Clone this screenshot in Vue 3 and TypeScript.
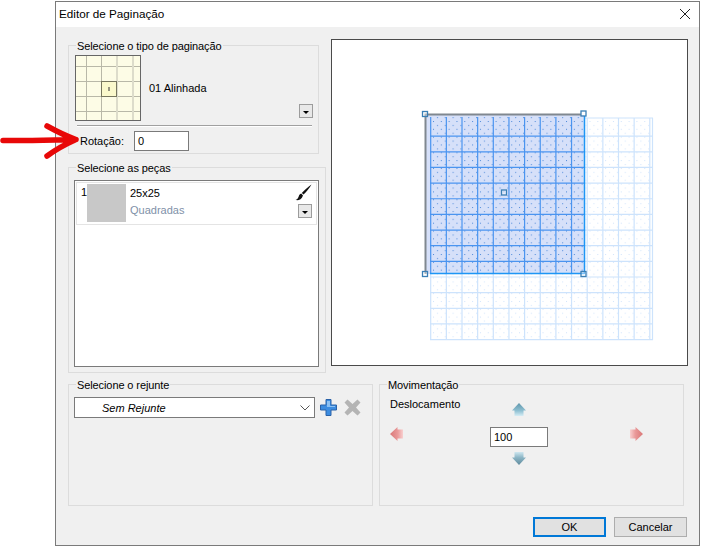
<script setup lang="ts">
const STEP = 15.65
const range = (n: number, from = 0) => Array.from({ length: n - from }, (_, i) => i + from)
const vLight = [...range(15).map((k) => 430.7 + k * STEP), 652.5]
const hLight = [118, ...range(15, 1).map((k) => 120.5 + k * STEP)]
const vDark = range(10).map((k) => 430.7 + k * STEP)
const hDark = range(10, 1).map((k) => 120.5 + k * STEP)
const handles = [
  [425, 114],
  [583.5, 113.5],
  [425, 274],
  [583.5, 274],
  [504, 192.5],
]
</script>

<template>
  <div class="page">
    <div class="dialog">
      <header class="titlebar">
        <span class="title">Editor de Paginação</span>
        <svg class="close" width="12" height="12" viewBox="0 0 12 12">
          <path d="M1 1 L11 11 M11 1 L1 11" stroke="#222" stroke-width="1" fill="none" />
        </svg>
      </header>

      <div class="content">
        <div class="top">
          <div class="left">
            <section class="group group-type">
              <span class="legend">Selecione o tipo de paginação</span>
              <div class="type-row">
                <svg class="thumb" width="66" height="66" viewBox="75 55 66 66">
                  <rect x="75" y="55" width="66" height="66" fill="#fdfce6" />
                  <path d="M86.5 55V121M101.5 55V121M75 66.5H141M75 81.5H141M75 96.5H141M75 111.5H141" stroke="#b9b8a8" stroke-width="1" />
                  <path d="M117 55V121M133 55V121" stroke="#dddccb" stroke-width="2" />
                  <rect x="101.5" y="81.5" width="15" height="15" fill="#fbf9cc" stroke="#77765f" />
                  <rect x="108.5" y="87" width="1" height="4" fill="#333" />
                  <rect x="75.5" y="55.5" width="65" height="65" fill="none" stroke="#666" />
                </svg>
                <span class="type-name">01 Alinhada</span>
                <button class="mini type-drop"><i></i></button>
              </div>
              <div class="divider"></div>
              <div class="rotation">
                <label class="rot-label">Rotação:</label>
                <div class="input rot-input">0</div>
              </div>
            </section>

            <section class="group group-pieces">
              <span class="legend">Selecione as peças</span>
              <div class="list">
                <div class="piece">
                  <span class="index">1</span>
                  <div class="swatch"></div>
                  <div class="piece-text">
                    <span>25x25</span>
                    <span class="muted">Quadradas</span>
                  </div>
                  <div class="piece-tools">
                    <svg width="17" height="17" viewBox="0 0 17 17">
                      <path d="M16.5 0.5 C13 3 9 6.5 6.8 9 L8.6 10.6 C11 8 14.5 4 16.5 0.5 Z" fill="#111" />
                      <path d="M6.2 9.6 C4 10 4 12.5 3 14 C2.4 15 1.4 15.6 0.5 16 C3.5 16.6 6.6 15.6 8 11.4 Z" fill="#111" />
                    </svg>
                    <button class="mini"><i></i></button>
                  </div>
                </div>
              </div>
            </section>
          </div>

          <div class="preview">
            <svg width="355" height="325" viewBox="332 40 355 325">
              <defs>
                <pattern id="dotsLight" x="432" y="120" width="7.825" height="7.825" patternUnits="userSpaceOnUse">
                  <rect x="1" y="1" width="1" height="1" fill="#cfe3fb" />
                  <rect x="5" y="5" width="1" height="1" fill="#cfe3fb" />
                </pattern>
                <pattern id="dotsDark" x="432" y="120" width="7.825" height="7.825" patternUnits="userSpaceOnUse">
                  <rect x="1" y="1" width="1" height="1" fill="#4a86d8" />
                  <rect x="5" y="5" width="1" height="1" fill="#4a86d8" />
                </pattern>
              </defs>
              <rect x="430" y="118" width="223" height="222" fill="url(#dotsLight)" />
              <line v-for="x in vLight" :key="'vl' + x" :x1="x" :x2="x" y1="118" y2="340" stroke="#cde3fc" stroke-width="1.2" />
              <line v-for="y in hLight" :key="'hl' + y" :y1="y" :y2="y" x1="430" x2="653" stroke="#cde3fc" stroke-width="1.2" />

              <rect x="426" y="115" width="158" height="159" fill="#d6e0f9" />
              <rect x="430" y="117" width="154" height="157" fill="url(#dotsDark)" />
              <line v-for="x in vDark" :key="'vd' + x" :x1="x" :x2="x" y1="117" y2="274" stroke="#4a94f0" stroke-width="1.2" />
              <line v-for="y in hDark" :key="'hd' + y" :y1="y" :y2="y" x1="430" x2="584" stroke="#4a94f0" stroke-width="1.2" />
              <path d="M584.5 116V274M430 273.5H584.5" stroke="#1e96f5" stroke-width="1.5" fill="none" />
              <path d="M425.5 274V114.5H581" stroke="#808890" stroke-width="2" fill="none" />

              <rect
                v-for="h in handles"
                :key="h[0] + '-' + h[1]"
                :x="h[0] - 2.5"
                :y="h[1] - 2.5"
                width="5"
                height="5"
                fill="#fff"
                fill-opacity="0.4"
                stroke="#3b7fb5"
                stroke-width="1.3"
              />
            </svg>
          </div>
        </div>

        <div class="bottom">
          <section class="group group-grout">
            <span class="legend">Selecione o rejunte</span>
            <div class="grout-row">
              <div class="combo">
                <span class="combo-text">Sem Rejunte</span>
                <svg width="10" height="6" viewBox="0 0 10 6">
                  <path d="M0.5 0.5 L5 5 L9.5 0.5" stroke="#555" fill="none" />
                </svg>
              </div>
              <svg class="plus" width="17" height="17" viewBox="0 0 17 17">
                <path d="M6 0.5H11V6H16.5V11H11V16.5H6V11H0.5V6H6Z" fill="#3c8ce0" stroke="#2a62a8" />
                <path d="M7 2H10V7H15V8H7Z" fill="#8cc0f2" />
              </svg>
              <svg class="cross" width="17" height="17" viewBox="0 0 17 17">
                <path d="M3.5 0.5 L8.5 5 L13.5 0.5 L16.5 3.5 L12 8.5 L16.5 13.5 L13.5 16.5 L8.5 12 L3.5 16.5 L0.5 13.5 L5 8.5 L0.5 3.5 Z" fill="#b4b4b4" />
              </svg>
            </div>
          </section>

          <section class="group group-move">
            <span class="legend">Movimentação</span>
            <div class="move-grid">
              <span class="offset-label">Deslocamento</span>
              <svg class="arrow-up" width="14" height="13" viewBox="0 0 14 13">
                <defs>
                  <linearGradient id="gUp" x1="0" y1="0" x2="0" y2="1">
                    <stop offset="0" stop-color="#5f95ab" />
                    <stop offset="0.6" stop-color="#8fc0d2" />
                    <stop offset="1" stop-color="#d6edf5" />
                  </linearGradient>
                </defs>
                <path d="M7 0 L14 7.5 H11.5 V13 H2.5 V7.5 H0 Z" fill="url(#gUp)" />
              </svg>
              <svg class="arrow-left" width="13" height="14" viewBox="0 0 13 14">
                <defs>
                  <linearGradient id="gLeft" x1="0" y1="0" x2="1" y2="0">
                    <stop offset="0" stop-color="#d97878" />
                    <stop offset="0.6" stop-color="#ea9a9a" />
                    <stop offset="1" stop-color="#f8d0d0" />
                  </linearGradient>
                </defs>
                <path d="M0 7 L7.5 0 V2.5 H13 V11.5 H7.5 V14 Z" fill="url(#gLeft)" />
              </svg>
              <div class="input move-input">100</div>
              <svg class="arrow-right" width="13" height="14" viewBox="0 0 13 14">
                <defs>
                  <linearGradient id="gRight" x1="1" y1="0" x2="0" y2="0">
                    <stop offset="0" stop-color="#d97878" />
                    <stop offset="0.6" stop-color="#ea9a9a" />
                    <stop offset="1" stop-color="#f8d0d0" />
                  </linearGradient>
                </defs>
                <path d="M13 7 L5.5 0 V2.5 H0 V11.5 H5.5 V14 Z" fill="url(#gRight)" />
              </svg>
              <svg class="arrow-down" width="14" height="13" viewBox="0 0 14 13">
                <defs>
                  <linearGradient id="gDown" x1="0" y1="1" x2="0" y2="0">
                    <stop offset="0" stop-color="#5f8a9c" />
                    <stop offset="0.6" stop-color="#8fb8c8" />
                    <stop offset="1" stop-color="#cfe7f0" />
                  </linearGradient>
                </defs>
                <path d="M7 13 L14 5.5 H11.5 V0 H2.5 V5.5 H0 Z" fill="url(#gDown)" />
              </svg>
            </div>
          </section>
        </div>

        <footer class="footer">
          <button class="btn btn-primary">OK</button>
          <button class="btn">Cancelar</button>
        </footer>
      </div>
    </div>

    <svg class="red-arrow" width="82" height="38" viewBox="0 0 82 38">
      <path d="M3 18.5 C25 19 50 18 76 17.5 M47 4 C56 9 66 14 76 17.5 C66 22 55 28 47 34" stroke="#e80808" stroke-width="5.5" stroke-linecap="round" stroke-linejoin="round" fill="none" />
    </svg>
  </div>
</template>

<style scoped>
.page {
  position: relative;
  width: 701px;
  height: 547px;
  box-sizing: border-box;
  padding: 1px 0 0 55px;
  background: #fff;
  overflow: hidden;
  font-family: "Liberation Sans", Arial, sans-serif;
  font-size: 11px;
  color: #000;
}
.dialog {
  width: 645px;
  height: 545px;
  box-sizing: border-box;
  border: 1px solid #7a7a7a;
  background: #f0f0f0;
  display: flex;
  flex-direction: column;
}
.titlebar {
  height: 25px;
  box-sizing: border-box;
  flex: none;
  background: #fff;
  display: flex;
  align-items: center;
  justify-content: space-between;
  padding: 0 8px 2px 3px;
}
.title {
  font-size: 11.7px;
}
.content {
  flex: 1;
  padding: 12px 11px 0 12px;
  display: flex;
  flex-direction: column;
}
.top {
  display: flex;
  gap: 5px;
  height: 333px;
}
.left {
  width: 258px;
  padding-top: 6px;
  box-sizing: border-box;
}
.group {
  position: relative;
  box-sizing: border-box;
  border: 1px solid #dcdcdc;
}
.legend {
  position: absolute;
  top: -6px;
  left: 7px;
  padding: 0 1px;
  line-height: 13px;
  background: #f0f0f0;
  white-space: nowrap;
  letter-spacing: -0.1px;
}
.group-type {
  width: 251px;
  height: 109px;
  padding: 9px 5px 0 6px;
}
.type-row {
  display: flex;
  align-items: center;
}
.thumb {
  display: block;
  flex: none;
}
.type-name {
  margin-left: 8px;
}
.mini {
  width: 14px;
  height: 14px;
  padding: 0;
  border: 1px solid #9c9c9c;
  background: #e8e8e8;
  display: flex;
  align-items: center;
  justify-content: center;
  flex: none;
}
.mini i {
  display: block;
  width: 0;
  height: 0;
  border-left: 3.5px solid transparent;
  border-right: 3.5px solid transparent;
  border-top: 3.5px solid #000;
  margin-top: 2px;
}
.type-drop {
  margin-left: auto;
  align-self: flex-end;
  margin-bottom: 3px;
}
.divider {
  margin: 4px 1px 0 2px;
  height: 0;
  border-top: 1px solid #a0a0a0;
  border-bottom: 1px solid #fff;
}
.rotation {
  display: flex;
  align-items: center;
  margin-top: 4px;
  padding-left: 5px;
}
.rot-label {
  width: 54px;
}
.input {
  box-sizing: border-box;
  height: 20px;
  line-height: 18px;
  background: #fff;
  border: 1px solid #7a7a7a;
  padding-left: 3px;
}
.rot-input {
  width: 55px;
}
.group-pieces {
  width: 258px;
  height: 206px;
  margin-top: 13px;
  padding: 12px 6px 5px 5px;
}
.list {
  box-sizing: border-box;
  width: 245px;
  height: 187px;
  border: 1px solid #7a7a7a;
  background: #fff;
  padding: 1px;
}
.piece {
  position: relative;
  height: 43px;
  box-sizing: border-box;
  border: 1px solid #e4e4e4;
  display: flex;
  padding: 1px 4px 1px 4px;
}
.index {
  width: 6px;
  line-height: 14px;
  margin-top: 1px;
}
.swatch {
  width: 39px;
  height: 38px;
  background: #c8c8c8;
}
.piece-text {
  margin-left: 4px;
  display: flex;
  flex-direction: column;
  gap: 3px;
  padding-top: 2px;
  line-height: 14px;
}
.muted {
  color: #7f91a8;
}
.piece-tools {
  margin-left: auto;
  display: flex;
  flex-direction: column;
  align-items: flex-end;
  gap: 3px;
}
.preview {
  width: 357px;
  height: 327px;
  box-sizing: border-box;
  border: 1px solid #4a4a4a;
  background: #fff;
}
.preview svg {
  display: block;
}
.bottom {
  display: flex;
  gap: 6px;
  margin-top: 12px;
  height: 122px;
}
.group-grout,
.group-move {
  width: 305px;
  height: 122px;
}
.group-grout {
  padding: 12px 0 0 5px;
}
.grout-row {
  display: flex;
  align-items: center;
}
.combo {
  box-sizing: border-box;
  width: 241px;
  height: 21px;
  border: 1px solid #7a7a7a;
  background: #fff;
  display: flex;
  align-items: center;
  justify-content: space-between;
  padding: 0 4px 0 27px;
}
.combo-text {
  font-style: italic;
}
.plus {
  margin-left: 5px;
}
.cross {
  margin-left: 7px;
}
.move-grid {
  display: grid;
  grid-template-columns: 100px 58px 82px 14px;
  grid-template-rows: 27px 20px 20px;
  padding: 13px 0 0 10px;
  align-items: center;
}
.offset-label {
  grid-column: 1;
  grid-row: 1;
  align-self: start;
  line-height: 13px;
}
.arrow-up {
  grid-column: 2;
  grid-row: 1;
  justify-self: center;
  align-self: start;
  margin: 5px 0 0 -1px;
}
.arrow-left {
  grid-column: 1;
  grid-row: 2;
  margin-top: -2px;
}
.move-input {
  grid-column: 2;
  grid-row: 2;
  align-self: start;
  margin-top: 2px;
}
.arrow-right {
  grid-column: 4;
  grid-row: 2;
  margin-top: -2px;
}
.arrow-down {
  grid-column: 2;
  grid-row: 3;
  justify-self: center;
  margin: 7px 0 0 -1px;
}
.footer {
  display: flex;
  justify-content: flex-end;
  gap: 8px;
  margin-top: 11px;
  padding-right: 1px;
}
.btn {
  box-sizing: border-box;
  width: 73px;
  height: 20px;
  padding: 0;
  border: 1px solid #adadad;
  background: #e1e1e1;
  font: inherit;
  color: #000;
}
.btn-primary {
  border: 2px solid #0078d7;
}
.red-arrow {
  position: absolute;
  left: 0;
  top: 122px;
}
</style>
